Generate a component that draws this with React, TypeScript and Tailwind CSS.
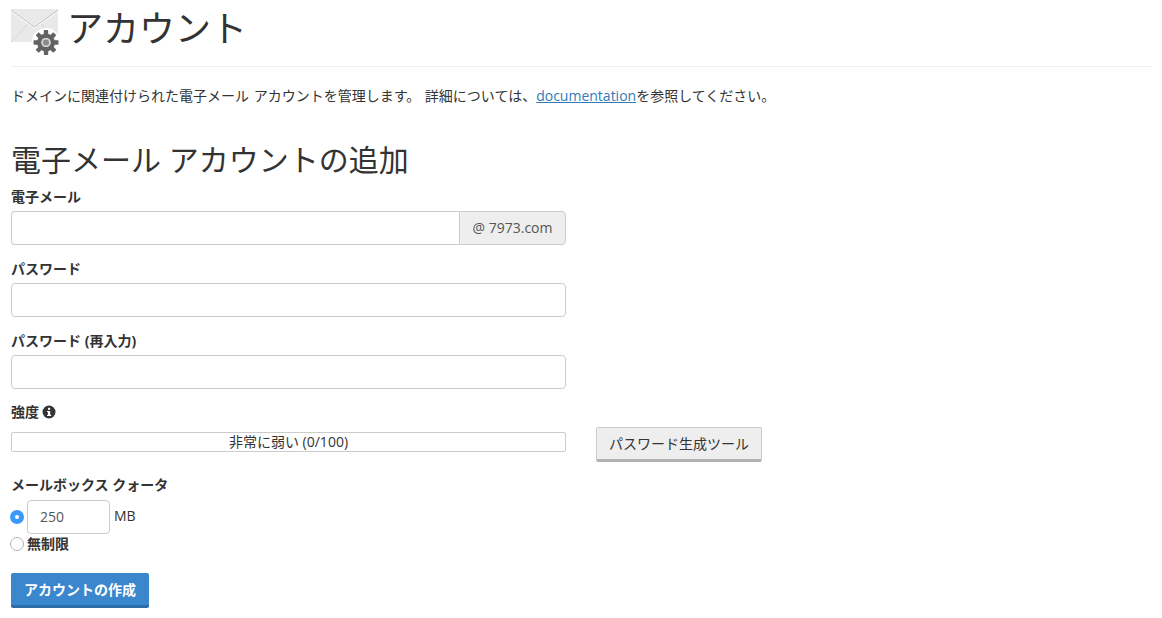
const font = { fontFamily: '"Open Sans", "Noto Sans CJK JP", sans-serif' };

function MailGear() {
  return (
    <svg width="48" height="48" viewBox="0 0 48 48" className="shrink-0">
      <rect x="0" y="0" width="47" height="33" rx="2" fill="#e9e9ea" />
      <path d="M0 33 L17 15 M47 33 L30 15" fill="none" stroke="#d6d6d8" strokeWidth="1" />
      <path d="M0 1.5 L23.5 18.5 L47 1.5" fill="none" stroke="#f7f7f7" strokeWidth="2.5" />
      <path d="M0 1 L23.5 18 L47 1" fill="none" stroke="#bdbdbf" strokeWidth="1" />
      <g transform="translate(35 33.5)">
        <circle r="14.5" fill="#fff" opacity="0.9" />
        <g fill="#626264">
          {[0, 45, 90, 135, 180, 225, 270, 315].map((a) => (
            <rect key={a} x="-2.2" y="-12.5" width="4.4" height="6" rx="0.8" transform={`rotate(${a})`} />
          ))}
        </g>
        <circle r="6.8" fill="none" stroke="#626264" strokeWidth="4.4" />
        <circle r="4.6" fill="#d2d2d2" />
        <circle r="3" fill="#8a8a8c" />
      </g>
    </svg>
  );
}

function InfoDot() {
  return (
    <svg width="14" height="14" viewBox="0 0 14 14" className="ml-[3px] shrink-0">
      <circle cx="7" cy="7" r="6.5" fill="#333" />
      <rect x="6" y="2.8" width="2.2" height="2" fill="#fff" />
      <path d="M5 6 H8.2 V9.8 H9.2 V11 H5 V9.8 H6 V7.2 H5 Z" fill="#fff" />
    </svg>
  );
}

function Label({ children }: { children: React.ReactNode }) {
  return <div className="text-[14px] leading-[20px] font-bold text-[#333] flex items-center">{children}</div>;
}

function TextBox() {
  return <input className="block w-[555px] h-[34px] border border-[#ccc] rounded-[4px] bg-white" />;
}

export default function App() {
  return (
    <div className="bg-white h-[618px] px-[11px] overflow-hidden text-[#333] text-[14px]" style={font}>
      <div className="flex items-start h-[65px] pt-[9px]">
        <MailGear />
        <h1 className="ml-[8px] text-[36px] leading-[40px] font-normal text-[#333]">アカウント</h1>
      </div>
      <div className="border-t border-[#eee] mt-[1px]" />
      <p className="mt-[19px] text-[14px] leading-[20px] [word-spacing:1px]">
        ドメインに関連付けられた電子メール アカウントを管理します。 詳細については、
        <span className="text-[#337ab7] underline">documentation</span>を参照してください。
      </p>
      <h2 className="mt-[37px] text-[30px] leading-[33px] font-normal text-[#333]">電子メール アカウントの追加</h2>

      <div className="mt-[11px]">
        <Label>電子メール</Label>
        <div className="flex w-[555px] h-[34px] mt-[4px]">
          <input className="flex-1 min-w-0 border border-r-0 border-[#ccc] rounded-l-[4px] bg-white" />
          <div className="w-[107px] pb-[2px] border border-[#ccc] rounded-r-[4px] bg-[#eee] flex items-center justify-center text-[#555]">
            @ 7973.com
          </div>
        </div>
      </div>

      <div className="mt-[14px]">
        <Label>パスワード</Label>
        <div className="mt-[4px]">
          <TextBox />
        </div>
      </div>

      <div className="mt-[14px]">
        <Label>パスワード (再入力)</Label>
        <div className="mt-[4px]">
          <TextBox />
        </div>
      </div>

      <div className="mt-[13px]">
        <Label>
          強度
          <InfoDot />
        </Label>
        <div className="flex items-start mt-[5px]">
          <div className="w-[555px] h-[20px] mt-[5px] border border-[#ccc] rounded-[2px] text-center text-[14px] leading-[18px] text-[#333]">
            非常に弱い (0/100)
          </div>
          <button className="ml-[30px] h-[35px] w-[166px] border border-[#ccc] border-b-[3px] border-b-[#b3b3b3] rounded-[2px] bg-[#eee] text-[#333] text-[14px]">
            パスワード生成ツール
          </button>
        </div>
      </div>

      <div className="mt-[13px]">
        <Label>メールボックス クォータ</Label>
        <div className="flex items-start mt-[5px] -ml-[1px]">
          <span className="mt-[10px] w-[14px] h-[14px] rounded-full bg-[#3b99fc] flex items-center justify-center shrink-0">
            <span className="w-[4px] h-[4px] rounded-full bg-white" />
          </span>
          <input
            readOnly
            value="250"
            className="ml-[3px] w-[83px] h-[34px] border border-[#ccc] rounded-[4px] bg-white pl-[12px] pb-[2px] text-[#555]"
          />
          <span className="ml-[4px] mt-[6px] leading-[20px] text-[#333]">MB</span>
        </div>
        <div className="flex items-center h-[20px] -ml-[1px]">
          <span className="w-[14px] h-[14px] rounded-full border border-[#b5b5b5] bg-white shrink-0" />
          <span className="ml-[3px] font-bold -translate-y-px">無制限</span>
        </div>
      </div>

      <button className="block mt-[19px] w-[138px] h-[35px] rounded-[2px] bg-[#3a87cd] border-b-[3px] border-b-[#2c6ca8] text-white font-bold text-[14px]">
        アカウントの作成
      </button>
    </div>
  );
}
